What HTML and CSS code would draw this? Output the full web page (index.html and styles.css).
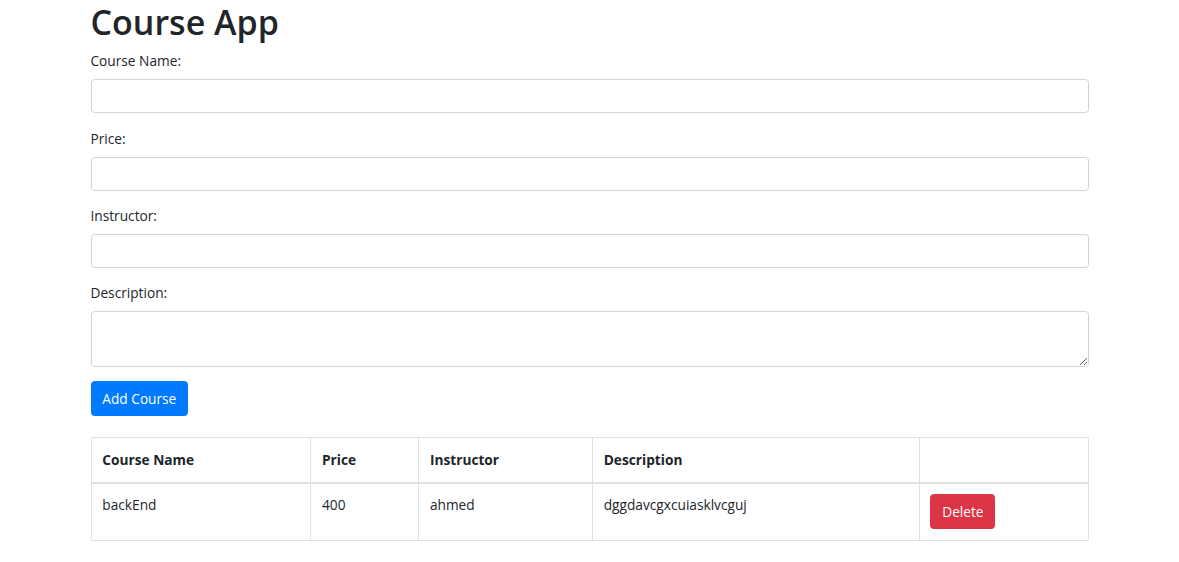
FILE: index.html
```html
<!DOCTYPE html>
<html lang="en">
<head>
<meta charset="utf-8">
<title>Course App</title>
<link rel="stylesheet" href="styles.css">
</head>
<body>
<div class="container">
  <h1 class="title">Course App</h1>
  <form class="course-form">
    <div class="form-group">
      <label class="form-label">Course Name:</label>
      <input class="form-control" type="text">
    </div>
    <div class="form-group">
      <label class="form-label">Price:</label>
      <input class="form-control" type="text">
    </div>
    <div class="form-group">
      <label class="form-label">Instructor:</label>
      <input class="form-control" type="text">
    </div>
    <div class="form-group">
      <label class="form-label">Description:</label>
      <textarea class="form-control textarea" rows="2"></textarea>
    </div>
    <button type="button" class="btn btn-primary">Add Course</button>
  </form>
  <table class="table">
    <colgroup>
      <col class="col-name">
      <col class="col-price">
      <col class="col-instr">
      <col class="col-desc">
      <col class="col-act">
    </colgroup>
    <thead>
      <tr>
        <th>Course Name</th>
        <th>Price</th>
        <th>Instructor</th>
        <th>Description</th>
        <th></th>
      </tr>
    </thead>
    <tbody>
      <tr>
        <td>backEnd</td>
        <td>400</td>
        <td>ahmed</td>
        <td>dggdavcgxcuiasklvcguj</td>
        <td><button type="button" class="btn btn-danger">Delete</button></td>
      </tr>
    </tbody>
  </table>
</div>
</body>
</html>
```
FILE: styles.css
```css
* { box-sizing: border-box; }
html, body { margin: 0; padding: 0; background: #fff; }
body {
  font-family: "Open Sans", "Noto Sans", sans-serif;
  font-size: 13.7px;
  line-height: 21.6px;
  color: #212529;
}
.container {
  width: 998px;
  margin: 0 auto;
}
.title {
  margin: 0 0 7.2px;
  padding-top: 1px;
  height: 43.2px;
  font-size: 34px;
  font-weight: 600;
  line-height: 42px;
}
.form-group { margin-bottom: 14.4px; }
.form-label {
  display: block;
  margin-bottom: 7.2px;
  line-height: 21.6px;
  height: 21.6px;
}
.form-control {
  display: block;
  width: 100%;
  height: 34.2px;
  padding: 5.4px 10.8px;
  font: inherit;
  color: #495057;
  background: #fff;
  border: 1px solid #ced4da;
  border-radius: 3.6px;
  margin: 0;
}
.textarea {
  height: 55.8px;
  resize: vertical;
}
.btn {
  display: inline-block;
  font: inherit;
  line-height: 21.6px;
  padding: 5.4px 10.8px;
  border: 1px solid transparent;
  border-radius: 3.6px;
  color: #fff;
  cursor: pointer;
}
.btn-primary { background: #007bff; border-color: #007bff; }
.btn-danger { background: #dc3545; border-color: #dc3545; }
.table {
  width: 100%;
  margin-top: 21.6px;
  border-collapse: collapse;
  border: 1px solid #dee2e6;
}
.col-name { width: 220px; }
.col-price { width: 108px; }
.col-instr { width: 174px; }
.col-desc { width: 327px; }
.col-act { width: 169px; }
.table th, .table td {
  padding: 10.8px;
  border: 1px solid #dee2e6;
  text-align: left;
  vertical-align: top;
  line-height: 21.6px;
}
.table thead th {
  border-bottom: 2px solid #dee2e6;
  font-weight: 700;
  vertical-align: bottom;
}
```
